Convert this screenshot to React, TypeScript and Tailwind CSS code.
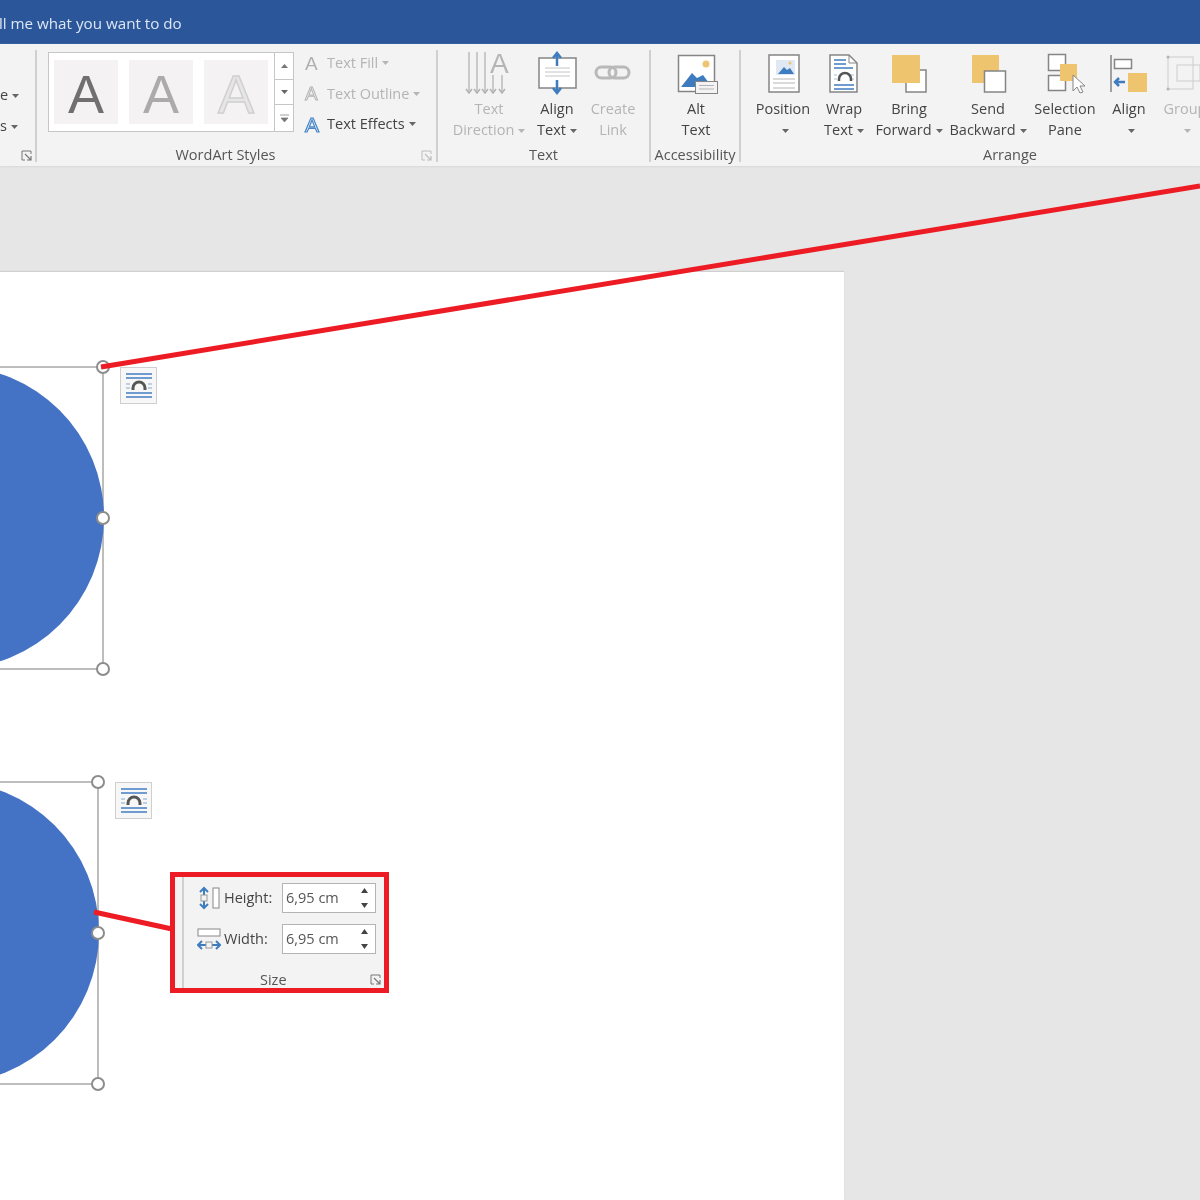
import type { ReactNode } from "react"

const GRAY = "#858585"
const BLUE = "#3f7cbf"
const YELLOW = "#efc46f"

function Caret({ light }: { light?: boolean }) {
  return (
    <svg width="7" height="4" viewBox="0 0 7 4" className="inline-block ml-[4px] align-middle">
      <path d="M0 0h7L3.5 4z" fill={light ? "#b5b5b5" : "#666"} />
    </svg>
  )
}

function Launcher({ light }: { light?: boolean }) {
  const c = light ? "#bdbdbd" : "#777"
  return (
    <svg width="11" height="11" viewBox="0 0 11 11">
      <path d="M10 4V1H1v9h3" fill="none" stroke={c} />
      <path d="M4 4l6 6M10 6v4H6" fill="none" stroke={c} strokeWidth="1.2" />
    </svg>
  )
}

function Icon({ x, children }: { x: number; children: ReactNode }) {
  return (
    <svg width="50" height="46" viewBox={`${x} 50 50 46`} className="shrink-0">
      {children}
    </svg>
  )
}

function RibbonButton({
  w,
  icon,
  top,
  bottom,
  caret,
  off,
}: {
  w: string
  icon: ReactNode
  top: string
  bottom?: string
  caret?: boolean
  off?: boolean
}) {
  return (
    <div className={`${w} flex flex-col items-center shrink-0 ${off ? "text-[#b4b4b4]" : "text-[#444]"}`}>
      <div className="h-[48px]">{icon}</div>
      <div className="leading-[21px] whitespace-nowrap">{top}</div>
      <div className="leading-[21px] whitespace-nowrap">
        {bottom}
        {caret && <Caret light={off} />}
      </div>
    </div>
  )
}

function Group({
  w,
  label,
  children,
  className,
  labelClass,
}: {
  w: string
  label: string
  children?: ReactNode
  className?: string
  labelClass?: string
}) {
  return (
    <div className={`${w} shrink-0 h-[112px] my-[6px] flex flex-col border-r-2 border-[#d0d0d0] relative blur-[0.4px]`}>
      <div className={`flex-1 flex ${className ?? ""}`}>{children}</div>
      <div className={`h-[14px] leading-[14px] text-center text-[#555] ${labelClass ?? ""}`}>{label}</div>
    </div>
  )
}

function Tile({ className }: { className: string }) {
  return (
    <div className="w-[64px] h-[64px] pt-[3px] bg-[#f5f2f4] flex items-center justify-center">
      <span className={`text-[54px] leading-none font-['Liberation_Sans',sans-serif] ${className}`}>A</span>
    </div>
  )
}

function CommandRow({ icon, label, off }: { icon: ReactNode; label: string; off?: boolean }) {
  return (
    <div className={`flex items-center h-[30px] whitespace-nowrap ${off ? "text-[#b4b4b4]" : "text-[#444]"}`}>
      <div className="w-[22px] flex justify-start">{icon}</div>
      {label}
      <Caret light={off} />
    </div>
  )
}

function WordArtStyles() {
  return (
    <>
      <div className="w-[246px] h-[80px] ml-[11px] mt-[2px] bg-white border border-[#c6c6c6] flex shrink-0">
        <div className="flex-1 flex items-center gap-[11px] pl-[5px]">
          <Tile className="text-[#707070]" />
          <Tile className="text-[#ababab]" />
          <Tile className="text-[#e6e6e6] [-webkit-text-stroke:1.5px_#d0d0d0]" />
        </div>
        <div className="w-[19px] flex flex-col border-l border-[#c6c6c6] text-[#666]">
          <div className="h-[27px] flex items-center justify-center border-b border-[#c6c6c6]">
            <svg width="7" height="4"><path d="M0 4h7L3.5 0z" fill="#777" /></svg>
          </div>
          <div className="h-[25px] flex items-center justify-center border-b border-[#c6c6c6]">
            <svg width="7" height="4"><path d="M0 0h7L3.5 4z" fill="#666" /></svg>
          </div>
          <div className="flex-1 flex items-center justify-center">
            <svg width="9" height="9"><path d="M0 1h9M1 4h7L4.5 8z" fill="#777" stroke="#777" strokeWidth="0.7" /></svg>
          </div>
        </div>
      </div>
      <div className="ml-[11px] flex flex-col gap-[0.5px] -mt-[2px]">
        <CommandRow
          off
          label="Text Fill"
          icon={<span className="text-[19px] text-[#b0b0b0] leading-none font-['Liberation_Sans',sans-serif]">A</span>}
        />
        <CommandRow
          off
          label="Text Outline"
          icon={<span className="text-[19px] text-[#f3f3f3] [-webkit-text-stroke:1px_#b5b5b5] leading-none font-['Liberation_Sans',sans-serif]">A</span>}
        />
        <CommandRow
          label="Text Effects"
          icon={<span className="text-[21px] text-[#eaf2fa] [-webkit-text-stroke:1.2px_#4a86c5] leading-none font-['Liberation_Sans',sans-serif]">A</span>}
        />
      </div>
      <div className="absolute right-[4px] bottom-[1px]">
        <Launcher light />
      </div>
    </>
  )
}

function LayoutOptions({ className }: { className: string }) {
  return (
    <div className={`absolute w-[37px] h-[37px] bg-[#f7f7f7] border border-[#cfcfcf] flex items-center justify-center blur-[0.4px] ${className}`}>
      <svg width="30" height="28" viewBox="0 0 30 28">
        <path d="M2 2h26M2 6h26M2 21h26M2 25h26" stroke="#6f9bd0" strokeWidth="2" />
        <path d="M2 12h4M2 16h4M24 12h4M24 16h4" stroke="#a9c2e2" strokeWidth="1.5" />
        <path d="M9 18v-2a6 6 0 0 1 12 0v2" fill="none" stroke="#555" strokeWidth="3" />
      </svg>
    </div>
  )
}

function Handle({ className }: { className: string }) {
  return <div className={`absolute w-[14px] h-[14px] rounded-full bg-white border-2 border-[#8c8c8c] ${className}`} />
}

function Shape({ className }: { className: string }) {
  return (
    <div className={`absolute left-[-200px] h-[304px] border-r-2 border-y-2 border-[#bdbdbd] ${className}`}>
      <div className="absolute right-[-2px] top-[-2px] w-[303px] h-[303px] rounded-full bg-[#4472c4]" />
      <Handle className="right-[-8px] top-[-8px]" />
      <Handle className="right-[-8px] top-[143px]" />
      <Handle className="right-[-8px] bottom-[-8px]" />
    </div>
  )
}

function SizeRow({ icon, label }: { icon: ReactNode; label: string }) {
  return (
    <div className="flex items-center h-[30px]">
      <div className="w-[27px] flex justify-start">{icon}</div>
      <div className="w-[58px] text-[#444] whitespace-nowrap">{label}</div>
      <div className="w-[94px] h-[30px] bg-white border border-[#b4b4b4] flex items-center pl-[3px] pr-[6px] justify-between text-[#555]">
        6,95 cm
        <svg width="9" height="22" viewBox="0 0 9 22">
          <path d="M1 6h7L4.5 1zM1 16h7l-3.500 5z" fill="#444" />
        </svg>
      </div>
    </div>
  )
}

function SizeBox() {
  return (
    <div className="absolute left-[170px] top-[872px] w-[219px] h-[121px] border-[5px] border-[#ed1c24] bg-[#f3f3f3] text-[14.5px] font-['Open_Sans',sans-serif]">
      <div className="h-full ml-[7px] border-l-2 border-[#d0d0d0] pl-[13px] pt-[6px] flex flex-col gap-[11px] relative blur-[0.4px]">
        <SizeRow
          label="Height:"
          icon={
            <svg width="24" height="24" viewBox="0 0 24 24">
              <path d="M7 2v20M3 6l4-4 4 4M3 18l4 4 4-4" fill="none" stroke={BLUE} strokeWidth="2" />
              <rect x="4" y="9" width="6" height="6" fill="#f3f3f3" stroke="#999" />
              <rect x="16" y="2" width="6" height="20" fill="#fff" stroke="#888" />
            </svg>
          }
        />
        <SizeRow
          label="Width:"
          icon={
            <svg width="24" height="24" viewBox="0 0 24 24">
              <rect x="1" y="2" width="22" height="7" fill="#fff" stroke="#888" />
              <path d="M2 18h20M5 14l-4 4 4 4M19 14l4 4-4 4" fill="none" stroke={BLUE} strokeWidth="2" />
              <rect x="9" y="15" width="6" height="6" fill="#f3f3f3" stroke="#999" />
            </svg>
          }
        />
        <div className="absolute left-[76px] bottom-[1px] text-[#555] leading-[14px]">Size</div>
        <div className="absolute right-[3px] bottom-[3px]">
          <Launcher />
        </div>
      </div>
    </div>
  )
}

export default function App() {
  return (
    <div className="relative w-[1200px] h-[1200px] overflow-hidden flex flex-col bg-[#e6e6e6] font-['Open_Sans',sans-serif] text-[14.5px]">
      <div className="h-[44px] shrink-0 pt-[2px] bg-[#2b579a] flex items-center text-[15.2px] text-[#dce6f4] whitespace-nowrap">
        <span className="ml-[-18px] blur-[0.4px]">Tell me what you want to do</span>
      </div>

      <div className="h-[122px] shrink-0 bg-[#f3f3f3] flex overflow-hidden shadow-[0_1px_2px_#d8d8d8] z-10">
        <Group w="w-[37px]" label="">
          <div className="mt-[29px] text-[#444] leading-[31px] whitespace-nowrap">
            <div>e<Caret /></div>
            <div>s<Caret /></div>
          </div>
          <div className="absolute right-[3px] bottom-[1px]">
            <Launcher />
          </div>
        </Group>

        <Group w="w-[401px]" label="WordArt Styles" labelClass="pr-[22px]">
          <WordArtStyles />
        </Group>

        <Group w="w-[213px]" label="Text" className="pl-[8px]">
          <RibbonButton
            w="w-[86px]"
            off
            top="Text"
            bottom="Direction"
            caret
            icon={
              <Icon x={464}>
                <path d="M469 52v39M477 52v39M485 52v39M493 75v16M502 75v16" stroke="#bcbcbc" strokeWidth="1.5" />
                <path d="M466 89l3 4 3-4M474 89l3 4 3-4M482 89l3 4 3-4M490 89l3 4 3-4M499 89l3 4 3-4" fill="none" stroke="#b0b0b0" strokeWidth="1.5" />
                <text x="490" y="73" fontSize="28" fill="#b5b5b5" fontFamily="Liberation Sans">A</text>
              </Icon>
            }
          />
          <RibbonButton
            w="w-[50px]"
            top="Align"
            bottom="Text"
            caret
            icon={
              <Icon x={532}>
                <rect x="539" y="58" width="37" height="30" fill="#fff" stroke={GRAY} strokeWidth="1.5" />
                <path d="M545 68h25M545 72h25M545 76h25" stroke="#c4c4c4" />
                <path d="M557 66V54M553 58l4-5 4 5M557 80v12M553 88l4 5 4-5" fill="none" stroke={BLUE} strokeWidth="2.5" />
              </Icon>
            }
          />
          <RibbonButton
            w="w-[62px]"
            off
            top="Create"
            bottom="Link"
            icon={
              <Icon x={588}>
                <rect x="596" y="67" width="20" height="11" rx="5.500" fill="none" stroke="#b9b9b9" strokeWidth="3" />
                <rect x="609" y="67" width="20" height="11" rx="5.500" fill="none" stroke="#b9b9b9" strokeWidth="3" />
              </Icon>
            }
          />
        </Group>

        <Group w="w-[90px]" label="Accessibility" className="pl-[1px]">
          <RibbonButton
            w="w-[88px]"
            top="Alt"
            bottom="Text"
            icon={
              <Icon x={671}>
                <rect x="678.500" y="55.500" width="36" height="36" fill="#fff" stroke={GRAY} strokeWidth="1.5" />
                <circle cx="706" cy="64" r="3.500" fill={YELLOW} />
                <path d="M681 87l11-14 5 5 6-3 9 12z" fill={BLUE} />
                <rect x="695.500" y="81.500" width="22" height="12" fill="#f3f3f3" stroke={GRAY} />
                <path d="M699 85.500h15M699 89h15" stroke="#b5b5b5" />
              </Icon>
            }
          />
        </Group>

        <Group w="w-[540px]" label="Arrange" className="pl-[9px]">
          <RibbonButton
            w="w-[66px]"
            top="Position"
            bottom=""
            caret
            icon={
              <Icon x={758}>
                <rect x="769" y="55" width="30" height="37" fill="#fff" stroke={GRAY} strokeWidth="1.5" />
                <rect x="776" y="60" width="19" height="15" fill="#dfe8f3" />
                <path d="M778 74l6-7 3 3 3-2 4 6z" fill={BLUE} />
                <circle cx="790" cy="63" r="1.500" fill={YELLOW} />
                <path d="M773 79h22M773 83h22M773 88h22" stroke="#b5b5b5" />
              </Icon>
            }
          />
          <RibbonButton
            w="w-[56px]"
            top="Wrap"
            bottom="Text"
            caret
            icon={
              <Icon x={819}>
                <path d="M830 55h19l8 8v29h-27z" fill="#fff" stroke={GRAY} strokeWidth="1.5" />
                <path d="M849 55v8h8" fill="none" stroke={GRAY} />
                <path d="M834 60h12M834 64h12M834 68h19M834 85h20M834 89h20" stroke={BLUE} strokeWidth="1.5" />
                <path d="M834 75h3M834 79h3M851 75h3M851 79h3" stroke="#a9c2e2" />
                <path d="M839 81v-2a6 6 0 0 1 12 0v2" fill="none" stroke="#555" strokeWidth="2.5" />
              </Icon>
            }
          />
          <RibbonButton
            w="w-[74px]"
            top="Bring"
            bottom="Forward"
            caret
            icon={
              <Icon x={884}>
                <rect x="906" y="70" width="20" height="22" fill="#fff" stroke={GRAY} strokeWidth="1.5" />
                <rect x="892" y="55" width="28" height="28" fill={YELLOW} />
              </Icon>
            }
          />
          <RibbonButton
            w="w-[84px]"
            top="Send"
            bottom="Backward"
            caret
            icon={
              <Icon x={963}>
                <rect x="972" y="55" width="27" height="28" fill={YELLOW} />
                <rect x="984.500" y="71" width="21" height="21" fill="#fff" stroke={GRAY} strokeWidth="1.5" />
              </Icon>
            }
          />
          <RibbonButton
            w="w-[70px]"
            top="Selection"
            bottom="Pane"
            icon={
              <Icon x={1040}>
                <rect x="1048.500" y="54.500" width="17" height="16" fill="#fff" stroke={GRAY} strokeWidth="1.5" />
                <rect x="1048.500" y="75.500" width="17" height="15" fill="#fff" stroke={GRAY} strokeWidth="1.5" />
                <rect x="1060" y="64" width="17" height="17" fill={YELLOW} />
                <path d="M1073 75v16l4-4 3 6 3-1-3-6h5z" fill="#fff" stroke={GRAY} />
              </Icon>
            }
          />
          <RibbonButton
            w="w-[58px]"
            top="Align"
            bottom=""
            caret
            icon={
              <Icon x={1104}>
                <path d="M1111 55v37" stroke={GRAY} strokeWidth="1.5" />
                <rect x="1114.500" y="59.500" width="17" height="9" fill="#fff" stroke={GRAY} strokeWidth="1.5" />
                <rect x="1128" y="73" width="19" height="19" fill={YELLOW} />
                <path d="M1125 82h-10M1119 78l-4 4 4 4" fill="none" stroke={BLUE} strokeWidth="2.5" />
              </Icon>
            }
          />
          <RibbonButton
            w="w-[54px]"
            off
            top="Group"
            bottom=""
            caret
            icon={
              <Icon x={1160}>
                <rect x="1168" y="57" width="25" height="32" fill="none" stroke="#cdcdcd" />
                <rect x="1177" y="65" width="23" height="16" fill="none" stroke="#cdcdcd" />
                <circle cx="1168" cy="57" r="1.500" fill="#b5b5b5" />
                <circle cx="1168" cy="89" r="1.500" fill="#b5b5b5" />
              </Icon>
            }
          />
        </Group>
      </div>

      <div className="flex-1 pt-[106px] min-h-0">
        <div className="relative w-[844px] h-full bg-white shadow-[0_-1px_1px_#d0d0d0]">
          <Shape className="top-[94px] w-[304px]" />
          <LayoutOptions className="left-[120px] top-[95px]" />
          <Shape className="top-[509px] w-[299px]" />
          <LayoutOptions className="left-[115px] top-[510px]" />
        </div>
      </div>

      <svg width="1200" height="1200" viewBox="0 0 1200 1200" className="absolute inset-0 z-20 pointer-events-none">
        <path d="M101 367L1200 186" stroke="#ed1c24" strokeWidth="5" />
        <path d="M94 912L172 929" stroke="#ed1c24" strokeWidth="5" />
      </svg>
      <div className="z-30">
        <SizeBox />
      </div>
    </div>
  )
}
